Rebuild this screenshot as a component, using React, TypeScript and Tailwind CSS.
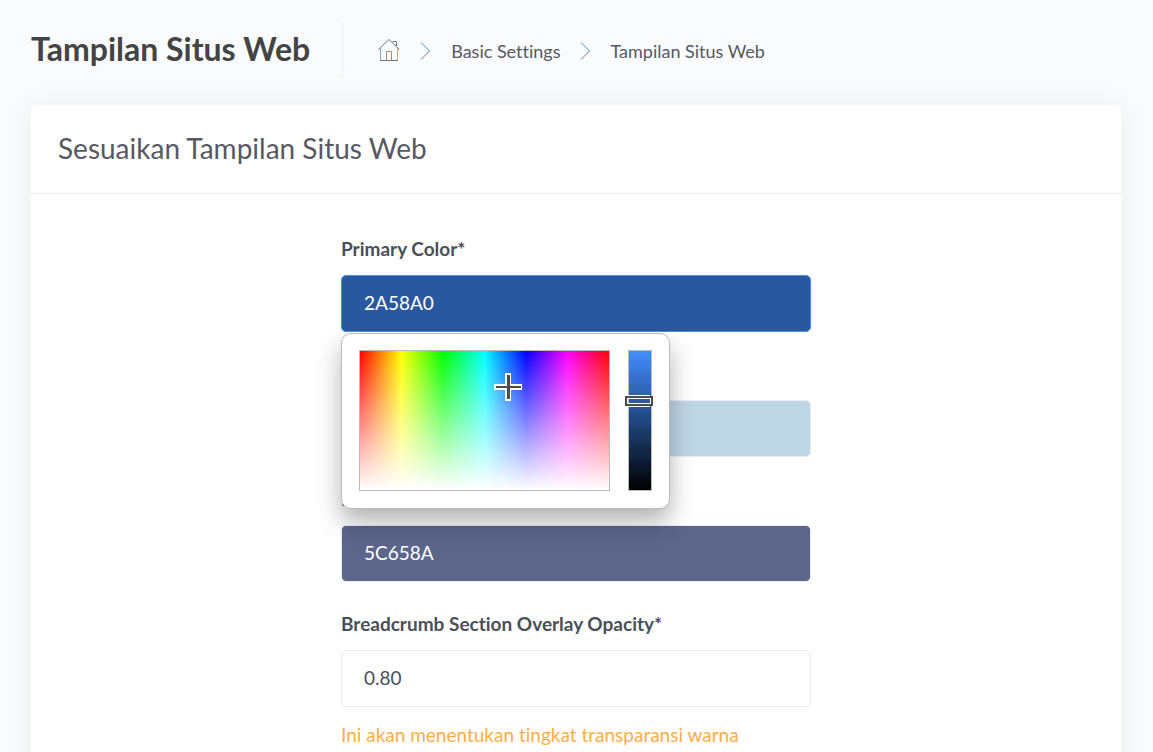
import { useState } from "react";

function HomeIcon() {
  return (
    <svg width="24" height="24" viewBox="0 0 24 24" fill="none" stroke="#6f7880" strokeWidth="1" aria-hidden="true">
      <path d="M1.5 11.5 L12 1.5 L22.5 11.5" />
      <path d="M3.5 9.5 V22.5" stroke="#7fb0d0" />
      <path d="M20.5 9.5 V22.5" stroke="#d9a878" />
      <path d="M3 22.5 H21" />
      <path d="M9.5 22.5 V13.5 H14.5 V22.5" stroke="#a98a70" />
      <path d="M15.5 3.5 H19.5 V8" />
    </svg>
  );
}

function Separator() {
  return (
    <svg width="12" height="18" viewBox="0 0 12 18" fill="none" strokeWidth="1" aria-hidden="true">
      <path d="M2 0.5 L10.5 9" stroke="#3f93cf" />
      <path d="M10.5 9 L2 17.5" stroke="#757a88" />
    </svg>
  );
}

function ColorPicker() {
  return (
    <div className="absolute top-[58px] left-0 z-10 flex h-[176px] w-[329px] items-start justify-between rounded-[10px] border border-[#bbbbbb] bg-white px-[17px] py-4 shadow-[0_13px_25px_rgba(0,0,0,0.3)]">
      <div
        role="img"
        aria-label="Hue and saturation"
        className="relative h-[141px] w-[251px] border border-[#bbbbbb] bg-[linear-gradient(to_bottom,rgba(255,255,255,0),#ffffff),linear-gradient(to_right,#ff0000,#ffff00,#00ff00,#00ffff,#0000ff,#ff00ff,#ff0000)]"
      >
        <svg className="absolute top-[22px] left-[134px]" width="28" height="28" viewBox="0 0 28 28" shapeRendering="crispEdges">
          <path d="M11 0h6v11h11v6H17v11h-6V17H0v-6h11z" fill="#ffffff" />
          <path d="M13 2h3v24h-3zM2 13h25v2H2z" fill="#4b4b4b" />
        </svg>
      </div>
      <div
        role="img"
        aria-label="Brightness"
        className="relative h-[141px] w-6 border border-[#bbbbbb] bg-[linear-gradient(to_bottom,#438dff,#000000)]"
      >
        <svg className="absolute top-[44px] -left-1" width="28" height="12" viewBox="0 0 28 12" shapeRendering="crispEdges" fill="none">
          <path d="M3 0h22v1H3zM3 11h22v1H3z" fill="#ffffff" />
          <path d="M1 2h26v8H1z" stroke="#4b4b4b" strokeWidth="2" />
          <path d="M2 3h24v6H2zM3 4v4h22V4z" fill="#ffffff" fillRule="evenodd" />
        </svg>
      </div>
    </div>
  );
}

const fieldBase =
  "block h-[57px] w-full rounded-[5px] border px-[22px] pb-[2px] text-[19px] leading-7 outline-none";

const initialFields = [
  { id: "primary", label: "Primary Color*", value: "2A58A0", style: "border-[#4491ef] bg-[#2a58a0] text-white" },
  { id: "secondary", label: "Secondary Color*", value: "", style: "border-[#ebedf2] bg-[#bfd6e5] text-black" },
  { id: "overlay", label: "Breadcrumb Overlay Color*", value: "5C658A", style: "border-[#ebedf2] bg-[#5c658a] text-white" },
  { id: "opacity", label: "Breadcrumb Section Overlay Opacity*", value: "0.80", style: "border-[#ebedf2] bg-white text-[#495057]" },
];

export default function App() {
  const [fields, setFields] = useState(initialFields);
  const update = (id: string, value: string) =>
    setFields(fields.map((field) => (field.id === id ? { ...field, value } : field)));

  return (
    <div className="h-screen overflow-hidden bg-[#f9fbfd] pt-[22px] pr-8 pl-[31px] font-['Lato',sans-serif] text-[#575962] [font-variant-ligatures:none]">
      <header className="flex h-14 items-center">
        <h1 className="pb-[2px] text-[32px] leading-10 font-bold text-[#444444]">Tampilan Situs Web</h1>
        <nav aria-label="Breadcrumb" className="ml-8 flex h-full items-center border-l border-[#eeeeee] pl-[34px] text-lg leading-6">
          <a href="#home" aria-label="Home"><HomeIcon /></a>
          <span className="mt-[2px] ml-[18px]"><Separator /></span>
          <a href="#basic" className="mt-[2px] ml-5">Basic Settings</a>
          <span className="mt-[2px] ml-[18px]"><Separator /></span>
          <a href="#appearance" className="mt-[2px] ml-5">Tampilan Situs Web</a>
        </nav>
      </header>

      <main className="mt-[27px] rounded-[7px] bg-white shadow-[0_2px_28px_rgba(69,65,78,0.08)]">
        <div className="border-b border-[#ebecec] px-[27px] pt-[23px] pb-[25px]">
          <h2 className="text-[28px] leading-10">Sesuaikan Tampilan Situs Web</h2>
        </div>
        <form className="mx-auto flex w-full max-w-[470px] flex-col gap-[30px] pt-[43px] pb-10">
          {fields.map((field) => (
            <div key={field.id}>
              <label htmlFor={field.id} className="mb-[14px] block text-[19px] leading-6 font-bold text-[#495057]">
                {field.label}
              </label>
              <div className="relative">
                <input
                  id={field.id}
                  value={field.value}
                  onChange={(event) => update(field.id, event.target.value)}
                  className={`${fieldBase} ${field.style}`}
                />
                {field.id === "primary" && <ColorPicker />}
              </div>
              {field.id === "opacity" && (
                <p className="mt-[14px] text-[19px] leading-7 text-[#ffad46]">Ini akan menentukan tingkat transparansi warna</p>
              )}
            </div>
          ))}
        </form>
      </main>
    </div>
  );
}
